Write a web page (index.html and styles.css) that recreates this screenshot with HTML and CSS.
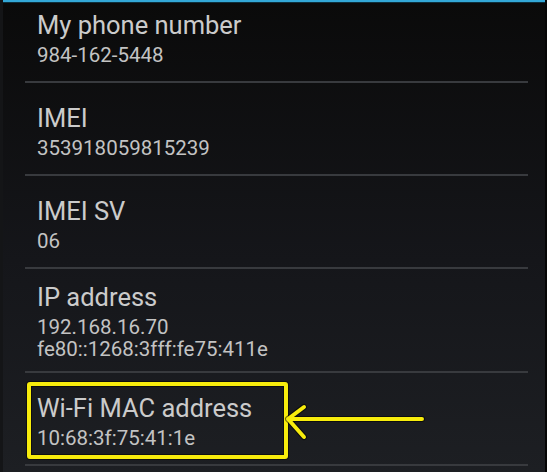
FILE: index.html
```html
<!DOCTYPE html>
<html lang="en">
<head>
  <meta charset="UTF-8">
  <meta name="viewport" content="width=device-width, initial-scale=1.0">
  <title>Status</title>
  <link rel="stylesheet" href="styles.css">
</head>
<body>
  <div class="screen">
    <div class="action-edge"></div>

    <ul class="status-list">
      <li class="status-item first">
        <span class="item-title">My phone number</span>
        <span class="item-value">984-162-5448</span>
      </li>
      <li class="status-item">
        <span class="item-title">IMEI</span>
        <span class="item-value">353918059815239</span>
      </li>
      <li class="status-item">
        <span class="item-title">IMEI SV</span>
        <span class="item-value">06</span>
      </li>
      <li class="status-item multi">
        <span class="item-title">IP address</span>
        <span class="item-value">192.168.16.70</span>
        <span class="item-value">fe80::1268:3fff:fe75:411e</span>
      </li>
      <li class="status-item marked">
        <span class="item-title">Wi-Fi MAC address</span>
        <span class="item-value">10:68:3f:75:41:1e</span>

        <!-- annotation drawn over the screenshot -->
        <div class="mark-box"></div>
        <svg class="mark-arrow" width="144" height="42" viewBox="0 0 144 42">
          <g fill="none" stroke-linecap="round" stroke-linejoin="round">
            <path d="M5 18 H139 M21 6 L5 18 L21 36" stroke="rgba(0,0,0,0.55)" stroke-width="6"/>
            <path d="M5 18 H139 M21 6 L5 18 L21 36" stroke="#f7ec0c" stroke-width="4"/>
          </g>
        </svg>
      </li>
    </ul>
  </div>
</body>
</html>
```

FILE: styles.css
```css
body {
  margin: 0;
  font-family: Roboto, 'Noto Sans', sans-serif;
  background: #0b0b0b;
}
.screen {
  height: 472px;
  overflow: hidden;
  background: linear-gradient(#0a0a0a, #15161a 55%, #1d1f23);
  border-left: 3px solid #141517;
  border-right: 2px solid #060606;
  box-sizing: border-box;
}
.action-edge {
  height: 2px;
  background: #33a8d8;
  border-bottom: 1px solid #0e2f3c;
  margin-left: -3px;
  margin-right: -2px;
}
.status-list {
  list-style: none;
  margin: 0 17px 0 22px;
  padding: 0;
}
.status-item {
  position: relative;
  display: flex;
  flex-direction: column;
  padding: 20px 0 15px 12px;
  border-bottom: 2px solid #383a3e;
}
.status-item.first {
  padding-top: 7px;
}
.status-item.multi {
  padding-top: 13px;
  padding-bottom: 11px;
}
.item-title {
  font-size: 25.5px;
  line-height: 30px;
  color: #cbcbcb;
}
.item-value {
  margin-top: 4px;
  font-size: 20.5px;
  line-height: 22px;
  color: #c3c3c3;
}
.item-value + .item-value {
  margin-top: 0;
}
.mark-box {
  position: absolute;
  top: 9px;
  left: 2px;
  width: 261px;
  height: 77px;
  box-sizing: border-box;
  border: 4px solid #f7ec0c;
  border-radius: 3px;
  box-shadow: 0 0 0 1px rgba(0,0,0,0.5), inset 0 0 0 1px rgba(0,0,0,0.5);
}
.mark-arrow {
  position: absolute;
  top: 28px;
  left: 258px;
}
```
